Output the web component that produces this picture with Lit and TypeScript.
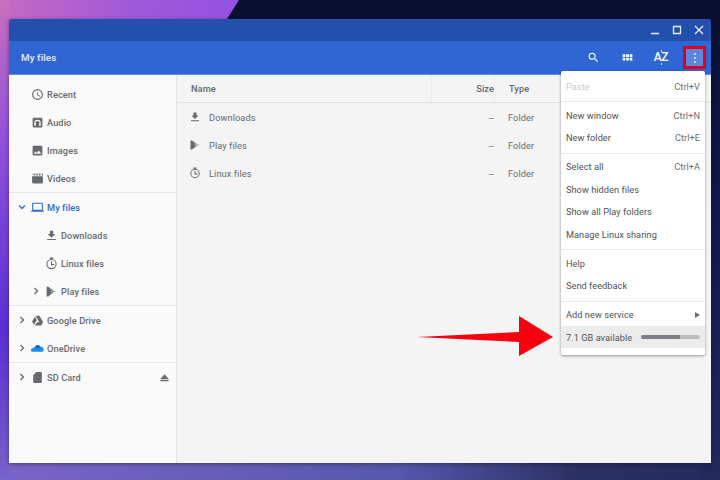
import { LitElement, html, css, svg } from 'lit';
import { customElement } from 'lit/decorators.js';

const icons: Record<string, unknown> = {
  recent: svg`<path d="M12 2a10 10 0 1 0 0 20 10 10 0 0 0 0-20zm0 18a8 8 0 1 1 0-16 8 8 0 0 1 0 16zm.5-13H11v6l5.2 3.2.8-1.3-4.5-2.7z"/>`,
  audio: svg`<path fill-rule="evenodd" d="M5 3h14a2 2 0 0 1 2 2v14a2 2 0 0 1-2 2H5a2 2 0 0 1-2-2V5a2 2 0 0 1 2-2zm7 4a6 6 0 0 0-6 6v5h3v-5h-1a4 4 0 0 1 8 0h-1v5h3v-5a6 6 0 0 0-6-6z"/>`,
  images: svg`<path d="M21 19V5a2 2 0 0 0-2-2H5a2 2 0 0 0-2 2v14c0 1.1.9 2 2 2h14a2 2 0 0 0 2-2zM8.500 13.500l2.500 3 3.500-4.500 4.500 6H5l3.500-4.500z"/>`,
  videos: svg`<path d="M2 8h20v11a2 2 0 0 1-2 2H4a2 2 0 0 1-2-2zM2 4h2l2 3h2L6 4h3l2 3h2l-2-3h3l2 3h2l-2-3h3l2 3h1V4a1 1 0 0 0-1-1H3a1 1 0 0 0-1 1z"/>`,
  laptop: svg`<path d="M20 18a2 2 0 0 0 2-2V5a2 2 0 0 0-2-2H4a2 2 0 0 0-2 2v11c0 1.100.9 2 2 2H0v2h24v-2zM4 5h16v11H4z"/>`,
  download: svg`<path d="M19 9h-4V3H9v6H5l7 7 7-7zM4 18.500v2h16v-2z"/>`,
  linux: svg`<path fill-rule="evenodd" d="M12 3.500a9.500 9.500 0 1 0 0 19 9.500 9.500 0 0 0 0-19zm0 2a7.500 7.500 0 1 1 0 15 7.500 7.500 0 0 1 0-15zM9 1h6v2.500H9zM11 8h2v5h4v2h-6z"/>`,
  play: svg`<path d="M3 3h3.500L13 10.500l-2 1.500 2 1.500L6.500 21H3zM14 11l8 1-8 1-1.500-1zM8 3.500l7.500 6.500-1.500 1zM8 20.500l7.500-6.500-1.500-1z"/>`,
  drive: svg`<path d="M8.500 3h7l7 12h-7zM7.300 5l3.500 6L5.500 20 2 14zM8 20l3.500-5H22l-3 6H8z"/>`,
  sd: svg`<path d="M18 2h-8L4 8v12a2 2 0 0 0 2 2h12a2 2 0 0 0 2-2V4a2 2 0 0 0-2-2z"/>`,
  eject: svg`<path d="M3 17h18v3H3zM12 5 3 15h18z"/>`,
  search: svg`<path d="M15.500 14h-.79l-.28-.27A6.470 6.470 0 0 0 16 9.500 6.500 6.500 0 1 0 9.500 16c1.610 0 3.090-.59 4.230-1.570l.27.28v.79l5 4.990L20.490 19l-4.990-5zm-6 0C7.010 14 5 11.990 5 9.500S7.010 5 9.500 5 14 7.010 14 9.500 11.990 14 9.500 14z"/>`,
  grid: svg`<path d="M3 6h5v5H3zM9.500 6h5v5h-5zM16 6h5v5h-5zM3 12.500h5v5H3zM9.500 12.500h5v5h-5zM16 12.500h5v5h-5z"/>`,
};

const icon = (name: string) =>
  html`<svg class="icon" viewBox="0 0 24 24" fill="currentColor">${icons[name]}</svg>`;

const cloud = html`<svg class="icon" viewBox="0 0 24 24">
  <path fill="#0f62c4" d="M7 9.500a6 6 0 0 1 10.800-.8L14 14H7z" />
  <path fill="#1a8ee8" d="M0 16a4 4 0 0 1 4-4.500 4 4 0 0 1 5-2l5 2.500 3-3a5 5 0 0 1 6 6.500l-1 2.500H3a3 3 0 0 1-3-2z" />
</svg>`;

interface NavRow {
  label: string;
  icon: string;
  chevron?: 'right' | 'down';
  nested?: boolean;
  active?: boolean;
  eject?: boolean;
}

const navSections: NavRow[][] = [
  [
    { label: 'Recent', icon: 'recent' },
    { label: 'Audio', icon: 'audio' },
    { label: 'Images', icon: 'images' },
    { label: 'Videos', icon: 'videos' },
  ],
  [
    { label: 'My files', icon: 'laptop', chevron: 'down', active: true },
    { label: 'Downloads', icon: 'download', nested: true },
    { label: 'Linux files', icon: 'linux', nested: true },
    { label: 'Play files', icon: 'play', nested: true, chevron: 'right' },
  ],
  [
    { label: 'Google Drive', icon: 'drive', chevron: 'right' },
    { label: 'OneDrive', icon: 'onedrive', chevron: 'right' },
  ],
  [{ label: 'SD Card', icon: 'sd', chevron: 'right', eject: true }],
];

const files = [
  { name: 'Downloads', icon: 'download' },
  { name: 'Play files', icon: 'play' },
  { name: 'Linux files', icon: 'linux' },
];

const menuGroups: { label: string; key?: string; disabled?: boolean }[][] = [
  [{ label: 'Paste', key: 'Ctrl+V', disabled: true }],
  [
    { label: 'New window', key: 'Ctrl+N' },
    { label: 'New folder', key: 'Ctrl+E' },
  ],
  [
    { label: 'Select all', key: 'Ctrl+A' },
    { label: 'Show hidden files' },
    { label: 'Show all Play folders' },
    { label: 'Manage Linux sharing' },
  ],
  [{ label: 'Help' }, { label: 'Send feedback' }],
];

@customElement('app-root')
export class AppRoot extends LitElement {
  static styles = css`
    :host {
      display: block;
      position: relative;
      width: 720px;
      height: 480px;
      overflow: hidden;
      box-sizing: border-box;
      padding: 19px 9px 17px;
      font-family: Roboto, "Liberation Sans", sans-serif;
      font-size: 9.2px;
      letter-spacing: 0.1px;
      color: #66696d;
    }
    .wallpaper {
      position: absolute;
      inset: 0;
      width: 720px;
      height: 480px;
    }
    .window {
      position: relative;
      height: 444px;
      display: flex;
      flex-direction: column;
      border-radius: 2px 2px 0 0;
      overflow: hidden;
      box-shadow: 0 1px 4px rgba(10, 10, 40, 0.45);
    }
    .titlebar {
      height: 22px;
      flex: none;
      background: #2350ac;
      display: flex;
      justify-content: flex-end;
      align-items: center;
      gap: 12px;
      padding-right: 7px;
      color: #e8eefb;
    }
    .titlebar svg {
      width: 10px;
      height: 10px;
      stroke: currentColor;
      stroke-width: 1.3;
      fill: none;
    }
    .toolbar {
      height: 34px;
      flex: none;
      background: #2f66d3;
      border-bottom: 1px solid #5d8fe6;
      box-sizing: border-box;
      display: flex;
      align-items: center;
      padding-left: 12px;
      color: #fff;
    }
    .toolbar .title {
      flex: 1;
      font-size: 9.800px;
      font-weight: 500;
      color: #e6eefc;
    }
    .tool {
      width: 34px;
      display: flex;
      justify-content: center;
      align-items: center;
    }
    .tool .icon {
      width: 13px;
      height: 13px;
    }
    .sort {
      flex-direction: column;
      font-size: 12px;
      font-weight: 500;
      letter-spacing: -0.4px;
      line-height: 11px;
      gap: 0;
    }
    .sort i {
      width: 1px;
      height: 2px;
      background: #dbe6fa;
    }
    .more {
      width: 23px;
      height: 23px;
      margin: 0 5px;
      box-sizing: border-box;
      border: 3px solid #e0001a;
      background: #5a86dc;
      display: flex;
      flex-direction: column;
      align-items: center;
      justify-content: center;
      gap: 2px;
    }
    .more i {
      width: 2px;
      height: 2px;
      border-radius: 50%;
      background: #e4ecfb;
    }
    .body {
      flex: 1;
      display: flex;
      min-height: 0;
    }
    .sidebar {
      width: 168px;
      flex: none;
      box-sizing: border-box;
      padding-top: 5px;
      background: #fafafa;
      border-right: 1px solid #e3e3e6;
      font-weight: 500;
    }
    .section {
      border-bottom: 1px solid #e6e6e8;
    }
    .section:last-child {
      border-bottom: none;
    }
    .row {
      height: 28px;
      display: flex;
      align-items: center;
      padding-left: 9px;
    }
    .row.nested {
      padding-left: 23px;
    }
    .row.active {
      color: #3367d6;
    }
    .chev {
      width: 8px;
      height: 8px;
      margin-right: 5px;
      flex: none;
      stroke: currentColor;
      stroke-width: 1.3;
      fill: none;
    }
    .row .icon {
      width: 13px;
      height: 13px;
      flex: none;
      margin-right: 3px;
    }
    .row .eject {
      width: 11px;
      height: 11px;
      margin: 1px 6px 0 auto;
    }
    .row .label {
      flex: 1;
    }
    .main {
      flex: 1;
      background: #f4f4f4;
    }
    .head,
    .file {
      display: flex;
      align-items: center;
      height: 28px;
      padding-left: 14px;
      box-sizing: border-box;
    }
    .head {
      font-weight: 500;
      border-bottom: 1px solid #e2e2e2;
    }
    .col-name {
      width: 240px;
      display: flex;
      align-items: center;
      align-self: stretch;
      gap: 8px;
      flex: none;
    }
    .file .col-name {
      margin-left: -2px;
      width: 242px;
    }
    .head .col-name,
    .head .col-size {
      border-right: 1px solid #ebebeb;
    }
    .col-size {
      width: 63px;
      align-self: stretch;
      display: flex;
      align-items: center;
      justify-content: flex-end;
      box-sizing: border-box;
    }
    .col-type {
      padding-left: 14px;
    }
    .file .icon {
      width: 12px;
      height: 12px;
    }
    .menu {
      position: absolute;
      left: 561px;
      top: 71px;
      width: 144px;
      height: 284px;
      box-sizing: border-box;
      background: #fff;
      border-radius: 2px;
      box-shadow: 0 1px 3px rgba(0, 0, 0, 0.4);
      color: #4f5256;
      letter-spacing: 0.05px;
      padding-top: 4px;
    }
    .group {
      border-bottom: 1px solid #e8e8e8;
      padding-bottom: 4px;
      margin-bottom: 1.800px;
    }
    .item {
      height: 22.400px;
      display: flex;
      align-items: center;
      justify-content: space-between;
      padding: 0 5px;
    }
    .item.disabled {
      color: #c9cacc;
    }
    .item .key {
      color: #6a6d71;
    }
    .tri {
      width: 0;
      height: 0;
      border-left: 5px solid #6a6d71;
      border-top: 3px solid transparent;
      border-bottom: 3px solid transparent;
    }
    .storage {
      background: #ececec;
    }
    .meter {
      width: 59px;
      height: 4px;
      border-radius: 2px;
      background: #bdbdbf;
      overflow: hidden;
    }
    .meter div {
      width: 66%;
      height: 100%;
      background: #7d7f86;
    }
    .arrow {
      position: absolute;
      left: 410px;
      top: 310px;
      width: 150px;
      height: 52px;
    }
  `;

  private renderRow(row: NavRow) {
    return html`<div class="row ${row.nested ? 'nested' : ''} ${row.active ? 'active' : ''}">
      ${row.chevron === 'right'
        ? html`<svg class="chev" viewBox="0 0 8 8"><path d="M2.500 1l3 3-3 3" /></svg>`
        : row.chevron === 'down'
          ? html`<svg class="chev" viewBox="0 0 8 8"><path d="M1 2.500l3 3 3-3" /></svg>`
          : html`<span class="chev"></span>`}
      ${row.icon === 'onedrive' ? cloud : icon(row.icon)}
      <span class="label">${row.label}</span>
      ${row.eject ? html`<svg class="icon eject" viewBox="0 0 24 24" fill="currentColor">${icons.eject}</svg>` : ''}
    </div>`;
  }

  render() {
    return html`
      <svg class="wallpaper" viewBox="0 0 720 480">
        <defs>
          <linearGradient id="wall" x1="0" y1="0" x2="0.12" y2="1">
            <stop offset="0" stop-color="#c96fbd" />
            <stop offset="0.3" stop-color="#8f50dc" />
            <stop offset="0.68" stop-color="#5a30d2" />
            <stop offset="1" stop-color="#7a64c8" />
          </linearGradient>
          <linearGradient id="top" x1="0" y1="0" x2="1" y2="0">
            <stop offset="0" stop-color="#c468c4" />
            <stop offset="0.5" stop-color="#a05ad8" />
            <stop offset="1" stop-color="#9350e2" />
          </linearGradient>
          <linearGradient id="bottom" x1="0" y1="0" x2="1" y2="0">
            <stop offset="0" stop-color="#7a64c8" />
            <stop offset="0.55" stop-color="#5558ab" />
            <stop offset="0.8" stop-color="#2b3062" />
            <stop offset="1" stop-color="#222a5c" />
          </linearGradient>
          <linearGradient id="night" x1="0" y1="0" x2="0" y2="1">
            <stop offset="0" stop-color="#0b0f30" />
            <stop offset="0.5" stop-color="#101a50" />
            <stop offset="1" stop-color="#222a5c" />
          </linearGradient>
        </defs>
        <rect width="720" height="480" fill="url(#wall)" />
        <rect x="9" width="240" height="19" fill="url(#top)" />
        <rect x="9" y="463" width="711" height="17" fill="url(#bottom)" />
        <polygon points="239,0 720,0 720,480 700,480 700,30 220,30" fill="url(#night)" />
      </svg>

      <div class="window">
        <div class="titlebar">
          <svg viewBox="0 0 10 10"><path d="M1 8.500h8" /></svg>
          <svg viewBox="0 0 10 10"><path d="M1.500 1.500h7v7h-7z" /></svg>
          <svg viewBox="0 0 10 10"><path d="M1 1l8 8M9 1l-8 8" /></svg>
        </div>
        <div class="toolbar">
          <div class="title">My files</div>
          <div class="tool">${icon('search')}</div>
          <div class="tool">${icon('grid')}</div>
          <div class="tool sort"><i></i>AZ<i></i></div>
          <div class="more"><i></i><i></i><i></i></div>
        </div>
        <div class="body">
          <nav class="sidebar">
            ${navSections.map(
              (rows) => html`<div class="section">${rows.map((r) => this.renderRow(r))}</div>`,
            )}
          </nav>
          <div class="main">
            <div class="head">
              <div class="col-name">Name</div>
              <div class="col-size">Size</div>
              <div class="col-type">Type</div>
            </div>
            ${files.map(
              (f) => html`<div class="file">
                <div class="col-name">${icon(f.icon)}<span>${f.name}</span></div>
                <div class="col-size">--</div>
                <div class="col-type">Folder</div>
              </div>`,
            )}
          </div>
        </div>
      </div>

      <svg class="arrow" viewBox="0 0 150 52">
        <polygon points="7,27 109,22 109,6 143,27 109,46 109,32" fill="#f4000f" />
      </svg>

      <div class="menu">
        ${menuGroups.map(
          (g) => html`<div class="group">
            ${g.map(
              (it) => html`<div class="item ${it.disabled ? 'disabled' : ''}">
                <span>${it.label}</span>${it.key ? html`<span class="key">${it.key}</span>` : ''}
              </div>`,
            )}
          </div>`,
        )}
        <div class="item"><span>Add new service</span><span class="tri"></span></div>
        <div class="item storage">
          <span>7.1 GB available</span>
          <div class="meter"><div></div></div>
        </div>
      </div>
    `;
  }
}
